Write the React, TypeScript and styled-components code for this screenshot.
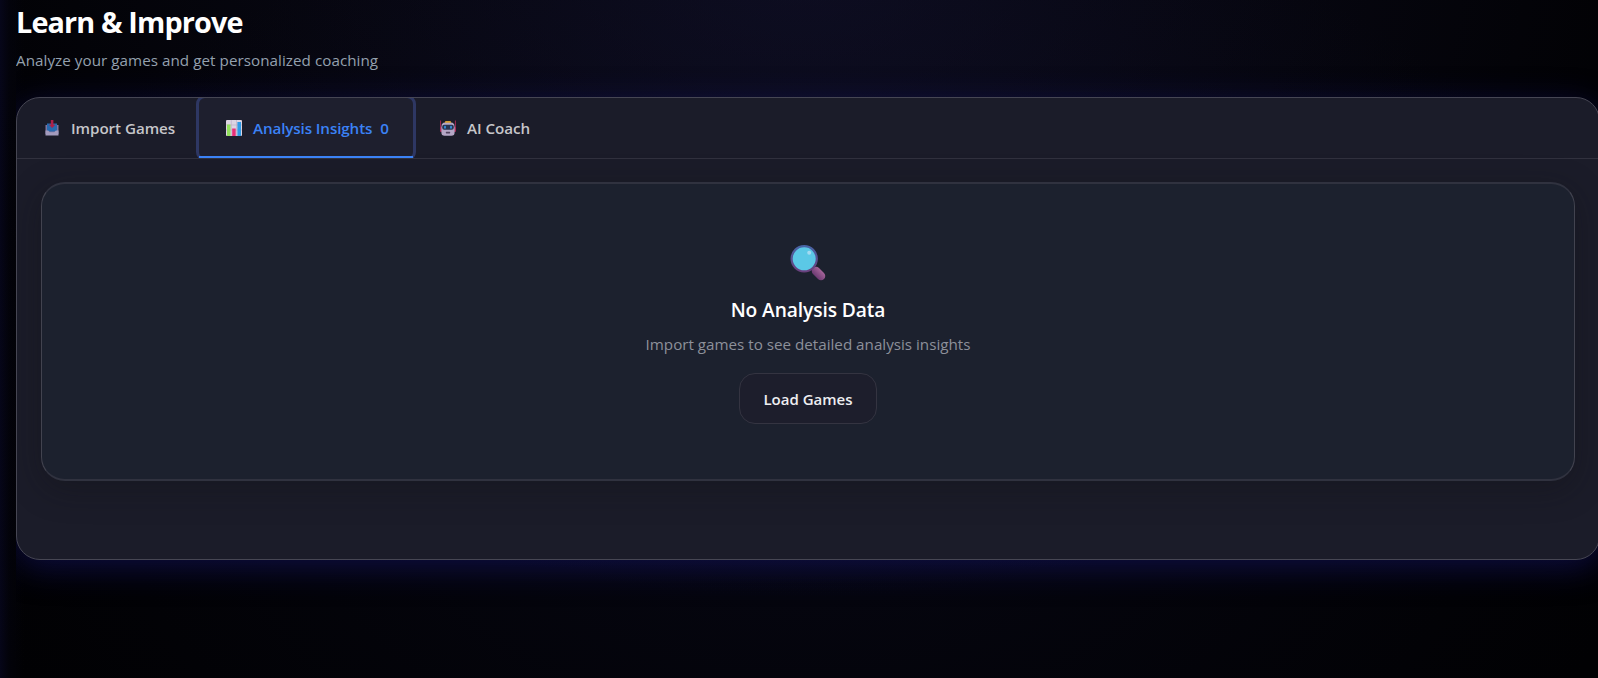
import React from "react";
import styled, { createGlobalStyle, css } from "styled-components";

const GlobalStyle = createGlobalStyle`
  * { box-sizing: border-box; }
  html, body { margin: 0; height: 100%; overflow: hidden; background: #000; }
  body { font-family: "Open Sans", "Noto Sans", sans-serif; color: #fff; }
`;

const Page = styled.div`
  height: 678px;
  padding-left: 16px;
  overflow: hidden;
  background:
    linear-gradient(90deg, rgba(14, 14, 62, 0.36) 0, rgba(8, 8, 36, 0.2) 9px, transparent 24px),
    radial-gradient(ellipse 880px 640px at 800px -40px, rgba(34, 33, 82, 0.36), transparent 100%),
    radial-gradient(ellipse 860px 560px at 800px 440px, rgba(14, 15, 42, 0.4), transparent 100%),
    #010103;
`;

const Content = styled.main`
  width: 1584px;
  height: 678px;
  overflow: hidden;
`;

const Header = styled.header`
  height: 97px;
`;

const Title = styled.h1`
  margin: 0;
  padding-top: 2px;
  font-size: 28.8px;
  line-height: 40px;
  font-weight: 700;
  letter-spacing: -0.86px;
`;

const Subtitle = styled.p`
  margin: 6px 0 0;
  font-size: 15.2px;
  line-height: 24px;
  letter-spacing: 0.05px;
  color: #94a0ae;
`;

const Panel = styled.section`
  height: 463px;
  overflow: hidden;
  border: 1px solid #464653;
  border-radius: 24px;
  background: #1b1c29;
  box-shadow: 0 8px 32px rgba(24, 24, 120, 0.5);
`;

const TabBar = styled.nav`
  display: flex;
  height: 61px;
  overflow: hidden;
  border-bottom: 1px solid #31313e;
`;

const Tab = styled.button<{ $width: number; $active?: boolean }>`
  position: relative;
  display: flex;
  align-items: center;
  width: ${(p) => p.$width}px;
  height: 60px;
  padding: 0 0 1px 26px;
  border: 0;
  background: transparent;
  font: 600 15.2px/24px "Open Sans", "Noto Sans", sans-serif;
  letter-spacing: -0.06px;
  white-space: nowrap;
  color: #c6c6ca;
  ${(p) =>
    p.$active &&
    css`
      color: #3b82f6;
      background: #1e1f2e;
      letter-spacing: -0.11px;
      border-radius: 6px;
      box-shadow: 0 0 0 3px #2e3763;
      &::after {
        content: "";
        position: absolute;
        left: 0;
        right: 0;
        bottom: 0;
        height: 2px;
        background: #3b82f6;
      }
    `}
`;

const TabIcon = styled.svg`
  flex: none;
  width: 18px;
  height: 18px;
  margin-right: 10px;
`;

const Count = styled.span`
  margin-left: 8px;
`;

const Body = styled.div`
  padding: 23px 24px;
`;

const EmptyCard = styled.div`
  display: flex;
  flex-direction: column;
  align-items: center;
  height: 299px;
  padding-top: 60px;
  border: solid;
  border-width: 2px 1px;
  border-color: #30323f #42434f;
  border-radius: 24px;
  background: #1c212e;
  box-shadow: 0 8px 32px rgba(18, 16, 20, 0.36);
`;

const Magnifier = styled.svg`
  width: 38px;
  height: 38px;
`;

const CardTitle = styled.h2`
  margin: 14px 0 0;
  font-size: 19.2px;
  line-height: 28px;
  font-weight: 600;
  letter-spacing: -0.1px;
`;

const CardText = styled.p`
  margin: 8px 0 0;
  font-size: 15.2px;
  line-height: 24px;
  color: #8d909a;
`;

const LoadButton = styled.button`
  width: 138px;
  height: 51px;
  margin-top: 17px;
  border: 1px solid #343441;
  border-radius: 16px;
  background: #1d1e2c;
  font: 600 15px/24px "Open Sans", "Noto Sans", sans-serif;
  color: #eeeef1;
`;

const InboxIcon = () => (
  <TabIcon viewBox="0 0 18 18">
    <path d="M2.500 6h13v9h-13z" fill="#80749f" />
    <path d="M4 4.500h10v8H4z" fill="#2769ae" />
    <path d="M2.500 11.500h2.700l1.500 1.800h4.600l1.500-1.800h2.700v5h-13z" fill="#a39bbd" />
    <path d="M7.800 1h2.600v4.800h2L9.100 9.100 5.800 5.800h2z" fill="#ad2049" />
  </TabIcon>
);

const ChartIcon = () => (
  <TabIcon viewBox="0 0 18 18">
    <rect x="1" y="1" width="16" height="16" rx="1" fill="#ddd4e2" />
    <path d="M1 6h16M1 11h16M6.300 1v16M11.500 1v16" stroke="#b9adc4" strokeWidth=".6" />
    <rect x="2" y="5.500" width="3.500" height="11.500" fill="#92df5c" />
    <rect x="7.200" y="9.500" width="3.500" height="7.500" fill="#e92f78" />
    <rect x="12.400" y="3" width="3.600" height="14" fill="#319be5" />
  </TabIcon>
);

const RobotIcon = () => (
  <TabIcon viewBox="0 0 18 18">
    <path d="M1.600 1.500v9M16.400 1.500v9" stroke="#a52551" strokeWidth="1" />
    <rect x="1" y="8" width="2.400" height="5" rx="1" fill="#a82c59" />
    <rect x="14.600" y="8" width="2.400" height="5" rx="1" fill="#a82c59" />
    <path d="M6.500 2h5l1.400 2.600H5.100z" fill="#d69b2d" />
    <path d="M4.300 3.800h9.400q1.900 1 1.900 4v5.700q0 3.200-3.200 3.200H5.600q-3.200 0-3.200-3.200V7.800q0-3 1.900-4z" fill="#b4a6c5" />
    <rect x="3.200" y="5.800" width="11.600" height="5" rx="2" fill="#293452" />
    <rect x="5" y="6.800" width="2" height="3" rx="1" fill="#3387cf" />
    <rect x="11" y="6.800" width="2" height="3" rx="1" fill="#3387cf" />
    <rect x="6.800" y="12.800" width="4.400" height="1.600" rx=".6" fill="#51435f" />
  </TabIcon>
);

const MagnifierIcon = () => (
  <Magnifier viewBox="0 0 38 38">
    <defs>
      <linearGradient id="handle" x1="0" y1="1" x2="1" y2="0">
        <stop offset="0" stopColor="#713d75" />
        <stop offset="1" stopColor="#a06196" />
      </linearGradient>
      <linearGradient id="rim" x1="0" y1="0" x2="0" y2="1">
        <stop offset="0" stopColor="#4864a5" />
        <stop offset="1" stopColor="#69407d" />
      </linearGradient>
    </defs>
    <path d="M24.500 24.500l3 3" stroke="#65366c" strokeWidth="4" />
    <path d="M27 27l5 5" stroke="url(#handle)" strokeWidth="8.500" strokeLinecap="round" />
    <circle cx="15.200" cy="14.800" r="12.600" fill="#5bc8e6" stroke="url(#rim)" strokeWidth="2.200" />
    <circle cx="20.200" cy="8.800" r="2" fill="#a4daf1" />
  </Magnifier>
);

export default function App() {
  return (
    <>
      <GlobalStyle />
      <Page>
        <Content>
          <Header>
            <Title>Learn &amp; Improve</Title>
            <Subtitle>Analyze your games and get personalized coaching</Subtitle>
          </Header>
          <Panel>
            <TabBar>
              <Tab $width={182}><InboxIcon />Import Games</Tab>
              <Tab $width={214} $active><ChartIcon />Analysis Insights<Count>0</Count></Tab>
              <Tab $width={146}><RobotIcon />AI Coach</Tab>
            </TabBar>
            <Body>
              <EmptyCard>
                <MagnifierIcon />
                <CardTitle>No Analysis Data</CardTitle>
                <CardText>Import games to see detailed analysis insights</CardText>
                <LoadButton>Load Games</LoadButton>
              </EmptyCard>
            </Body>
          </Panel>
        </Content>
      </Page>
    </>
  );
}
